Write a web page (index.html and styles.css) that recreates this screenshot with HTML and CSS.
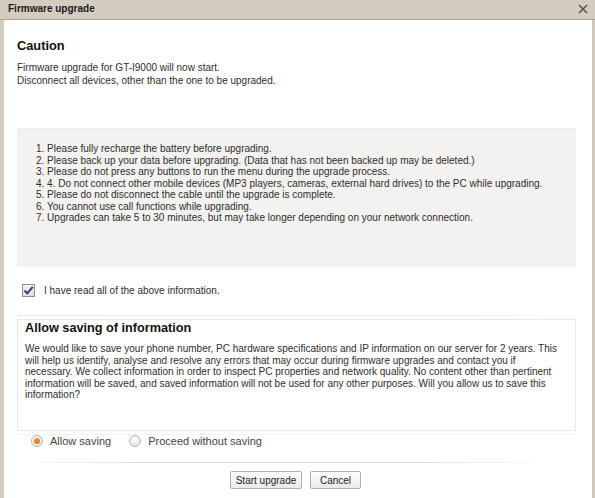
FILE: index.html
```html
<!DOCTYPE html>
<html>
<head>
<meta charset="utf-8">
<link rel="stylesheet" href="styles.css">
</head>
<body>
<div class="titlebar">
  <span class="title">Firmware upgrade</span>
  <svg class="close" width="10" height="10" viewBox="0 0 10 10"><path d="M1 1L9 9M9 1L1 9" stroke="#555" stroke-width="1.6"/></svg>
</div>
<div class="panel">
  <h1 class="h-caution">Caution</h1>
  <p class="intro">Firmware upgrade for GT-I9000 will now start.<br>Disconnect all devices, other than the one to be upgraded.</p>
  <div class="notes">
    <div>1. Please fully recharge the battery before upgrading.</div>
    <div>2. Please back up your data before upgrading. (Data that has not been backed up may be deleted.)</div>
    <div>3. Please do not press any buttons to run the menu during the upgrade process.</div>
    <div>4. 4. Do not connect other mobile devices (MP3 players, cameras, external hard drives) to the PC while upgrading.</div>
    <div>5. Please do not disconnect the cable until the upgrade is complete.</div>
    <div>6. You cannot use call functions while upgrading.</div>
    <div>7. Upgrades can take 5 to 30 minutes, but may take longer depending on your network connection.</div>
  </div>
  <div class="check-row">
    <span class="checkbox"><svg width="11" height="11" viewBox="0 0 11 11"><path d="M1.5 5.5L4.3 8.3L9.8 1.8" fill="none" stroke="#2b3e78" stroke-width="2"/></svg></span>
    <span class="check-label">I have read all of the above information.</span>
  </div>
  <div class="sep"></div>
  <div class="saving">
    <h2 class="h-saving">Allow saving of information</h2>
    <p class="saving-text">We would like to save your phone number, PC hardware specifications and IP information on our server for 2 years. This will help us identify, analyse and resolve any errors that may occur during firmware upgrades and contact you if necessary. We collect information in order to inspect PC properties and network quality. No content other than pertinent information will be saved, and saved information will not be used for any other purposes. Will you allow us to save this information?</p>
  </div>
  <div class="radios">
    <span class="radio on"></span><span class="radio-label">Allow saving</span>
    <span class="radio"></span><span class="radio-label">Proceed without saving</span>
  </div>
  <div class="sep2"></div>
  <div class="buttons">
    <button class="btn btn-start">Start upgrade</button>
    <button class="btn btn-cancel">Cancel</button>
  </div>
</div>
</body>
</html>
```

FILE: styles.css
```css
html, body {
  margin: 0;
  padding: 0;
}
body {
  width: 595px;
  height: 498px;
  overflow: hidden;
  background: #d5ccc0;
  font-family: "Liberation Sans", Arial, sans-serif;
  font-size: 10px;
  color: #2e2e2e;
}
.titlebar {
  height: 19px;
  border-bottom: 1px solid #a9a49c;
  display: flex;
  align-items: center;
  justify-content: space-between;
  padding: 0 7px 0 8px;
}
.title {
  font-weight: bold;
  font-size: 10px;
  color: #1a1a1a;
  margin-top: -3px;
}
.close {
  margin-top: -1px;
}
.panel {
  background: #fff;
  margin: 0 2px 0 4px;
  border-right: 1px solid #c9c4bc;
  height: 478px;
  padding: 18px 16px 0 13px;
  box-sizing: border-box;
}
.h-caution {
  margin: 0;
  font-size: 12.8px;
  line-height: 16px;
  font-weight: bold;
  color: #111;
}
.intro {
  margin: 7px 0 0 0;
  line-height: 13px;
}
.notes {
  margin-top: 41px;
  background: #f3f2f0;
  border-top: 1px solid #ecebe8;
  height: 139px;
  box-sizing: border-box;
  padding: 14px 0 0 19px;
  line-height: 11.5px;
}
.check-row {
  margin-top: 17px;
  display: flex;
  align-items: center;
  padding-left: 5px;
  height: 13px;
}
.checkbox {
  width: 11px;
  height: 11px;
  border: 1px solid #8f8f8f;
  background: linear-gradient(#f4f4f4, #dcdcdc);
  display: flex;
  align-items: center;
  justify-content: center;
}
.check-label {
  margin-left: 9px;
}
.sep {
  margin-top: 18px;
  height: 1px;
  background: linear-gradient(90deg, #e6e6e6, #eeeeee 80%, rgba(238,238,238,0));
}
.saving {
  margin-top: 3px;
  border: 1px solid #e8e8e8;
  height: 112px;
  box-sizing: border-box;
  padding: 0 16px 0 7px;
}
.h-saving {
  margin: 0;
  font-size: 12.7px;
  line-height: 16px;
  font-weight: bold;
  color: #111;
}
.saving-text {
  margin: 7px 0 0 0;
  line-height: 11.5px;
}
.radios {
  margin-top: 3px;
  height: 12px;
  display: flex;
  align-items: center;
  padding-left: 14px;
  font-size: 11px;
  color: #444;
  border-top: 1px solid #f3f3f3;
}
.radio {
  width: 10px;
  height: 10px;
  border-radius: 50%;
  border: 1px solid #b5b5b5;
  background: radial-gradient(circle at 40% 35%, #ffffff, #dedede);
  display: flex;
  align-items: center;
  justify-content: center;
}
.radio.on::after {
  content: "";
  width: 6px;
  height: 6px;
  border-radius: 50%;
  background: radial-gradient(circle at 40% 35%, #f39a3c, #d86f12);
}
.radio-label {
  margin-left: 7px;
  margin-right: 18px;
}
.sep2 {
  margin: 15px 28px 0 23px;
  height: 1px;
  background: linear-gradient(90deg, rgba(225,225,225,0.3), #dddddd 20%, #dddddd 75%, rgba(225,225,225,0));
}
.buttons {
  margin-top: 8px;
  display: flex;
  padding-left: 213px;
  gap: 8px;
}
.btn {
  font-family: "Liberation Sans", Arial, sans-serif;
  font-size: 10px;
  color: #222;
  height: 18px;
  padding: 0;
  border: 1px solid #b0b0b0;
  border-radius: 2px;
  background: linear-gradient(#ffffff, #e9e9e9);
  white-space: nowrap;
  display: flex;
  align-items: center;
  justify-content: center;
}
.btn-start {
  width: 72px;
}
.btn-cancel {
  width: 51px;
}
```
